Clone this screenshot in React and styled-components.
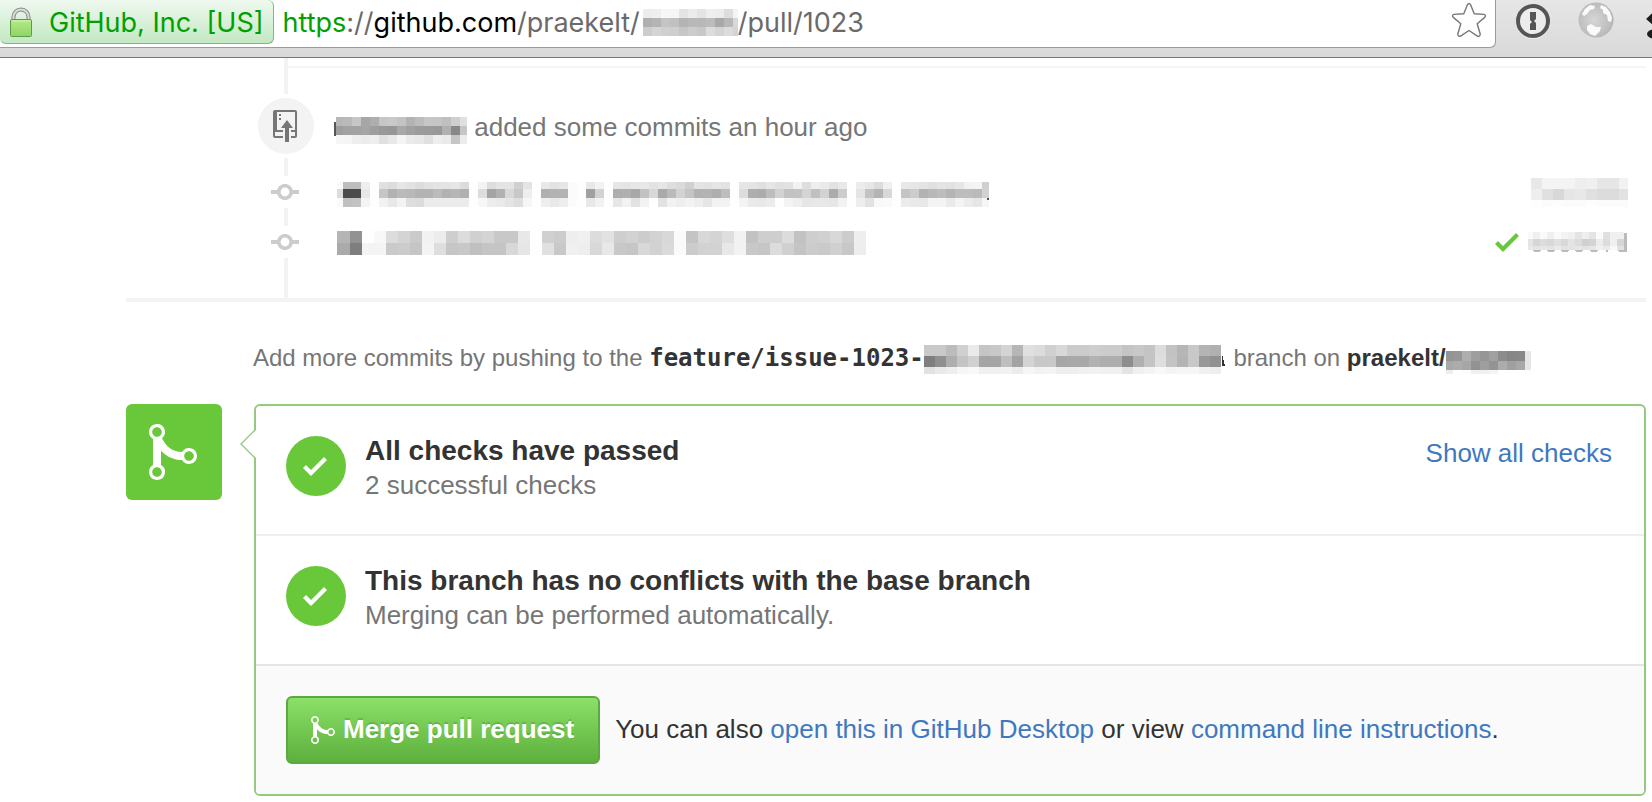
import React from "react";
import styled, { createGlobalStyle } from "styled-components";

const GlobalStyle = createGlobalStyle`
  * { box-sizing: border-box; }
  body {
    margin: 0;
    background: #fff;
    color: #333;
    font-family: "Liberation Sans", Arial, sans-serif;
    font-size: 26px;
    line-height: 34px;
    overflow-x: hidden;
  }
  button { font: inherit; cursor: pointer; }
  svg { display: block; flex: none; }
`;

/* ---------- browser chrome ---------- */

const BrowserBar = styled.header`
  display: flex;
  align-items: flex-start;
  height: 58px;
  background: linear-gradient(#e6e6e6, #d9d9d9);
  border-bottom: 1px solid #777;
  overflow: hidden;
`;

const AddressBar = styled.div`
  flex: 1;
  min-width: 0;
  display: flex;
  align-items: flex-start;
  height: 48px;
  padding-right: 8px;
  background: #fff;
  border: solid #9a9a9a;
  border-width: 0 1px 1px 0;
  border-bottom-right-radius: 6px;
  font-family: Inter, Roboto, sans-serif;
  font-size: 27px;
  line-height: 46px;
  white-space: nowrap;
`;

const IdentityButton = styled.button`
  flex: none;
  display: flex;
  align-items: center;
  gap: 16px;
  height: 44px;
  padding: 2px 9px 0 9px;
  color: #00a000;
  background: linear-gradient(#eff9ef, #c3e8c3);
  border: solid #7fb87f;
  border-width: 0 1px 1px 0;
  border-radius: 0 6px 6px 6px;
`;

const Url = styled.div`
  flex: 1;
  min-width: 0;
  padding-left: 9px;
  color: #6a6a6a;
  overflow: hidden;
`;

const Scheme = styled.span`
  color: #00a000;
`;

const Host = styled.span`
  color: #000;
`;

const IconButton = styled.button`
  flex: none;
  padding: 0;
  border: 0;
  background: none;
`;

const Extensions = styled.div`
  flex: none;
  display: flex;
  gap: 28px;
  width: 156px;
  padding: 2px 0 0 20px;
  overflow: hidden;
`;

/* ---------- timeline ---------- */

const Page = styled.main`
  padding: 0 6px 0 126px;
`;

const PreviousItem = styled.div`
  height: 36px;
  margin-left: 158px;
  padding-top: 8px;
  border-left: 4px solid #f3f3f3;
`;

const Rule = styled.hr`
  height: 2px;
  margin: 0;
  border: 0;
  background: #f5f5f5;
`;

const Timeline = styled.section`
  padding-left: 132px;
  border-bottom: 4px solid #f3f3f3;
`;

const TimelineRow = styled.div`
  display: flex;
  align-items: center;
  gap: 20px;
  min-height: ${(p) => (p.$tall ? 64 : 32)}px;
  padding-right: 18px;
`;

const Rail = styled.div`
  flex: none;
  display: flex;
  justify-content: center;
  width: 56px;
  padding-right: ${(p) => (p.$bare ? 2 : 0)}px;
  color: #ccc;
`;

const RailSegment = styled.div`
  width: 4px;
  height: ${(p) => p.$length}px;
  margin-left: 26px;
  background: #f3f3f3;
`;

const RailBadge = styled.span`
  display: flex;
  align-items: center;
  justify-content: center;
  width: 56px;
  height: 56px;
  padding-right: 2px;
  border-radius: 50%;
  background: #f3f3f3;
  color: #767676;
`;

const Summary = styled.p`
  margin: 0;
  padding-top: 2px;
  color: #767676;
`;

const CommitRef = styled.div`
  display: flex;
  align-items: center;
  gap: 9px;
  margin-left: auto;
  color: #69c83a;
`;

const PushHint = styled.p`
  margin: 0;
  padding: 39px 0 29px 127px;
  color: #767676;
  font-size: 24px;
  white-space: nowrap;
`;

const BranchName = styled.code`
  color: #333;
  font-family: "DejaVu Sans Mono", monospace;
  font-size: 24px;
  font-weight: 700;
`;

const RepoName = styled.strong`
  color: #333;
`;

/* ---------- merge box ---------- */

const MergeArea = styled.section`
  display: flex;
  align-items: flex-start;
  gap: 32px;
`;

const MergeAvatar = styled.div`
  flex: none;
  display: flex;
  align-items: center;
  justify-content: center;
  width: 96px;
  height: 96px;
  padding-right: 2px;
  border-radius: 6px;
  color: #fff;
  background: #69c83a;
`;

const MergeBox = styled.div`
  position: relative;
  flex: 1;
  min-width: 0;
  border: 2px solid #95c97e;
  border-radius: 6px;
`;

const Caret = styled.svg`
  position: absolute;
  top: 23px;
  left: -16px;
`;

const StatusRow = styled.div`
  display: flex;
  align-items: flex-start;
  gap: 19px;
  padding: 30px 32px 32px 30px;
  border-bottom: 2px solid ${(p) => (p.$last ? "#e5e5e5" : "#eee")};
`;

const StatusIcon = styled.span`
  flex: none;
  display: flex;
  align-items: center;
  justify-content: center;
  width: 60px;
  height: 60px;
  padding-right: 2px;
  border-radius: 50%;
  color: #fff;
  background: #69c83a;
`;

const StatusText = styled.div`
  flex: 1;
`;

const StatusTitle = styled.h4`
  margin: 0;
  font-size: 28px;
  line-height: 30px;
`;

const StatusDetail = styled.p`
  margin: 2px 0 0;
  color: #767676;
`;

const Link = styled.a`
  color: #4078c0;
  text-decoration: none;
`;

const MergeActions = styled.div`
  display: flex;
  align-items: center;
  gap: 15px;
  padding: 30px;
  background: #fafafa;
  border-radius: 0 0 4px 4px;
`;

const MergeButton = styled.button`
  flex: none;
  display: flex;
  align-items: center;
  gap: 8px;
  height: 68px;
  padding: 0 24px 0 23px;
  color: #fff;
  font-weight: 700;
  text-shadow: 0 -2px 0 rgba(0, 0, 0, 0.15);
  white-space: nowrap;
  background: linear-gradient(#8ae068, #5db03c);
  border: 2px solid #5ca941;
  border-radius: 6px;
`;

const ButtonLabel = styled.span`
  padding-bottom: 2px;
`;

const MergeHint = styled.p`
  margin: 0;
  padding-bottom: 2px;
`;

/* ---------- redacted text ---------- */

const MosaicSvg = styled.svg`
  display: ${(p) => (p.$inline ? "inline-block" : "block")};
  vertical-align: ${(p) => p.$drop || 0}px;
`;

/* Each band is [height, "shade shade ..."], a shade being the two hex digits of a grey. */
function Mosaic({ width, height, cell, first = cell, top = 0, bands, drop, children }) {
  let y = top;
  return (
    <MosaicSvg
      $inline={drop !== undefined}
      $drop={drop}
      width={width}
      height={height}
      shapeRendering="crispEdges"
      aria-hidden="true"
    >
      {bands.map(([h, shades]) => {
        const rowY = y;
        y += h;
        return shades.split(" ").map((s, i) => (
          <rect
            key={`${rowY}-${i}`}
            x={i === 0 ? 0 : first + (i - 1) * cell}
            y={rowY}
            width={i === 0 ? first : cell}
            height={h}
            fill={`#${s}${s}${s}`}
          />
        ));
      })}
      {children}
    </MosaicSvg>
  );
}

const urlRepo = [
  [9, "ff ec ee f6 f6 e4 ec e4 ee ec dd f4"],
  [9, "ff b0 b4 c4 c0 b4 b8 b8 bc a8 b8 d8"],
  [9, "ff cc d4 d0 ce c6 cc c8 dc d4 dc d4"],
];
const author = [
  [9, "b7 ba c6 a6 ae c6 c9 c3 b3 bc c6 c5 bf cf e0"],
  [9, "9d a2 a2 a5 9e 99 96 a8 a0 9b 9a 98 b0 88 c6"],
  [9, "f6 f5 ee ec ee e0 e8 f4 ea e8 e0 ee ea c5 ec"],
];
const messageOne = [
  [7, "fa bd bd ee fe e0 dc e6 e2 dd e2 e4 e4 e6 dc fe f3 dd e4 e4 d0 e4 fe e8 e2 e6 fb fe e8 f2 fe e6 e4 e6 e8 e2 e6 de da d0 e4 e2 e6 e2 fe e6 e4 e0 e6 e0 e2 f2 de ee ea e2 e8 fe ec e6 dc f0 fe e8 e6 e4 e0 e4 e2 e6 f2 f4 d0 ee"],
  [9, "dd 4b 4b e8 fe c6 b2 ba b8 b3 b3 bb b2 b6 b0 fe dd a4 b1 d8 c8 ee fe b0 b3 b3 fb fd a0 d2 fe ae b0 a8 c2 d8 aa ba d2 c4 b2 b3 ae bd fe dc ae ac bd d2 c2 c3 d4 c0 d2 ab cc fe e4 c2 b4 d8 fe c4 cc b2 b8 bd b4 bd bd ba d2 ee"],
  [9, "fa c0 c2 f4 fe f2 e8 f3 de dc ec ec ec ec ec fe f7 ed ea e4 de f6 fe ee e8 ee fc fe e8 f2 fe e6 f2 e2 f2 fe e2 f2 ee f3 ee e6 f2 f2 fe f4 ea e8 ec fe f4 ee e6 e8 e8 e6 f2 fe ee e2 f8 fa fe ec ea e8 f4 f4 ea f4 ec e6 f6 f4"],
];
const messageTwo = [
  [12, "b5 92 fe f8 dc d4 ca f2 ec ce dc d0 d4 c8 c8 e8 fe d0 cc ee f0 dc e2 ce d2 cc d2 d8 fa c4 d8 d4 de f2 c2 ce ce dc c2 ce d0 d8 cc ee"],
  [12, "aa 7e f4 f4 ca cc c5 f4 de c6 c8 c0 c5 c5 d8 e6 fe e0 c8 f0 ee d8 e8 c8 c6 d8 d2 da fa cc d2 d2 e8 f2 c8 c6 dc d0 c4 cc ca d0 c8 ee"],
];
const shaOne = [
  [11, "e8 f4 f4 f4 ee f0 e6 e6 f2"],
  [11, "ee e0 d8 e6 e8 e0 dc dc e2"],
  [7, "fe fb fd fb fb fd fb fb fb"],
];
const shaTwo = [
  [7, "fa f0 fa f0 fa f4 f0 e4 ee e4 fa e0 f0 f0"],
  [7, "e4 d6 dc d8 e0 d8 e4 dc d0 d4 ec dc f0 d6"],
  [4, "e8 e4 e6 e4 ea e2 e4 e6 e2 e6 f0 ea f8 e2"],
];
const branch = [
  [11, "c9 c9 bc d0 ea c5 c8 d4 b6 e0 dc d0 d8 cb cb ce cc cc c4 c8 c4 dc c2 b6 c8 b4 b0"],
  [11, "7e 90 ae c4 d0 a5 a5 be a3 d4 c8 c8 a6 a8 a8 b2 ae ae 8e b0 c4 de c4 b4 c8 98 90"],
  [7, "e2 ea ee f6 f8 f0 f0 f2 ec f6 f2 f4 ee ee f0 f2 f0 f0 e4 f0 f4 f8 f4 f6 f6 f0 ee"],
];
const repo = [
  [10, "94 96 ae 9e 96 a0 8c 86 88 e6"],
  [9, "a8 ac a6 92 9e 94 ac a0 a8 e6"],
  [4, "ee fe fc f0 f0 f4 fe fe fe fe"],
];

/* ---------- icons ---------- */

const icons = {
  merge: [12, "M10 7c-.73 0-1.38.41-1.73 1.02V8C7.22 7.98 6 7.64 5.14 6.98c-.75-.58-1.5-1.61-1.89-2.44A1.993 1.993 0 0 0 2 .99C.89.99 0 1.89 0 3a2 2 0 0 0 1 1.72v6.56c-.59.35-1 .99-1 1.72 0 1.11.89 2 2 2a1.993 1.993 0 0 0 1-3.72V7.67c.67.7 1.44 1.27 2.3 1.69.86.42 2.03.63 2.97.64v-.02c.36.61 1 1.02 1.73 1.02 1.11 0 2-.89 2-2 0-1.11-.89-2-2-2zm-6.8 6c0 .66-.55 1.2-1.2 1.2-.65 0-1.2-.55-1.2-1.2 0-.65.55-1.2 1.2-1.2.65 0 1.2.55 1.2 1.2zm0-10c0 .66-.55 1.2-1.2 1.2-.65 0-1.2-.55-1.2-1.2 0-.65.55-1.2 1.2-1.2.65 0 1.2.55 1.2 1.2zm6.8 7.2c-.66 0-1.2-.55-1.2-1.2 0-.65.55-1.2 1.2-1.2.65 0 1.2.55 1.2 1.2 0 .65-.55 1.2-1.2 1.2z"],
  push: [12, "M4 3H3V2h1v1zM3 5h1V4H3v1zm4 0L4 9h2v7h2V9h2L7 5zm4-5H1C.45 0 0 .45 0 1v12c0 .55.45 1 1 1h4v-1H1v-2h4v-1H2V1h9.02L11 10H9v1h2v2H9v1h2c.55 0 1-.45 1-1V1c0-.55-.45-1-1-1z"],
  commit: [14, "M10.86 7c-.45-1.72-2-3-3.86-3-1.86 0-3.41 1.28-3.86 3H0v2h3.14c.45 1.72 2 3 3.86 3 1.86 0 3.41-1.28 3.86-3H14V7h-3.14zM7 10.2c-1.22 0-2.2-.98-2.2-2.2 0-1.22.98-2.2 2.2-2.2 1.22 0 2.2.98 2.2 2.2 0 1.22-.98 2.2-2.2 2.2z"],
  check: [12, "M12 5l-8 8-4-4 1.5-1.5L4 10l6.5-6.5z"],
};

function Octicon({ name, scale = 2 }) {
  const [w, d] = icons[name];
  return (
    <svg width={w * scale} height={16 * scale} viewBox={`0 0 ${w} 16`} fill="currentColor" aria-hidden="true">
      <path d={d} />
    </svg>
  );
}

function LockIcon() {
  return (
    <svg width="24" height="32" viewBox="0 0 24 32" aria-hidden="true">
      <defs>
        <linearGradient id="lockBody" x1="0" y1="0" x2="0" y2="1">
          <stop offset="0" stopColor="#b4ea8c" />
          <stop offset="1" stopColor="#8fd464" />
        </linearGradient>
      </defs>
      <path d="M4.500 13V10a7.500 7.500 0 0 1 15 0V13" fill="none" stroke="#868686" strokeWidth="4" />
      <path d="M4.500 13V10a7.500 7.500 0 0 1 15 0V13" fill="none" stroke="#dcdcdc" strokeWidth="2" />
      <rect x="1.500" y="12.500" width="21" height="17" rx="1" fill="url(#lockBody)" stroke="#5c9c48" />
      <path d="M3 14h18" stroke="#cdf3b0" />
    </svg>
  );
}

function StarIcon() {
  return (
    <svg width="36" height="40" viewBox="0 0 36 40" aria-hidden="true">
      <path
        d="M16.400 4.700Q18 2.200 19.600 4.700L23.200 13.700L33 14.400Q35.600 15.200 33.700 17.400L26.200 23.800L29.200 34Q29.200 37 26.400 36.100L18 30.500L9.600 36.100Q6.800 37 6.800 34L9.800 23.800L2.300 17.400Q.4 15.200 3 14.400L12.800 13.700Z"
        fill="#fff"
        stroke="#777"
        strokeWidth="1.400"
        strokeLinejoin="round"
      />
    </svg>
  );
}

function KeyholeIcon() {
  return (
    <svg width="34" height="38" viewBox="0 0 34 38" aria-hidden="true">
      <circle cx="17" cy="20" r="17" fill="#fff" opacity=".5" />
      <circle cx="17" cy="19" r="15" fill="#ececec" stroke="#555" strokeWidth="4" />
      <path d="M14 10h6v7l-2 2 2 2v7H14v-6l2-2-2-2z" fill="#555" />
    </svg>
  );
}

function GlobeIcon() {
  return (
    <svg width="36" height="38" viewBox="0 0 36 38" aria-hidden="true">
      <defs>
        <radialGradient id="globe" cx=".45" cy=".5" r=".6">
          <stop offset="0" stopColor="#d6d6d6" />
          <stop offset=".8" stopColor="#bcbcbc" />
          <stop offset="1" stopColor="#a8a8a8" />
        </radialGradient>
      </defs>
      <circle cx="18" cy="18" r="17.500" fill="url(#globe)" />
      <path d="M7 7l5-4 5 1-1 3-4 1-3 4-3 2-2-2zM23 3l5 2 4 5 2 6-1 4-3-1-1-6-4-2 0-3-3-2zM9 24l4-2 5 3 5 0-1 4-3 3-2 2-5-2-3-4z" fill="#fafafa" />
    </svg>
  );
}

function OverflowIcon() {
  return (
    <svg width="28" height="38" viewBox="0 0 28 38" aria-hidden="true">
      <path d="M16 8L7 17l9 8" fill="none" stroke="#1c1c1c" strokeWidth="4" />
      <ellipse cx="14" cy="32" rx="9" ry="5" fill="#1c1c1c" />
    </svg>
  );
}

/* ---------- page ---------- */

function CommitRow({ message, sha }) {
  return (
    <TimelineRow>
      <Rail $bare>
        <Octicon name="commit" />
      </Rail>
      {message}
      <CommitRef>{sha}</CommitRef>
    </TimelineRow>
  );
}

function Status({ title, detail, action, last }) {
  return (
    <StatusRow $last={last}>
      <StatusIcon>
        <Octicon name="check" />
      </StatusIcon>
      <StatusText>
        <StatusTitle>{title}</StatusTitle>
        <StatusDetail>{detail}</StatusDetail>
      </StatusText>
      {action}
    </StatusRow>
  );
}

export default function App() {
  return (
    <>
      <GlobalStyle />
      <BrowserBar>
        <AddressBar>
          <IdentityButton type="button">
            <LockIcon />
            GitHub, Inc. [US]
          </IdentityButton>
          <Url>
            <Scheme>https</Scheme>://<Host>github.com</Host>/praekelt/
            <Mosaic width={98} height={27} cell={9} first={3} bands={urlRepo} drop={-4} />
            /pull/1023
          </Url>
          <IconButton type="button" aria-label="Bookmark this page">
            <StarIcon />
          </IconButton>
        </AddressBar>
        <Extensions>
          <IconButton type="button" aria-label="Password manager">
            <KeyholeIcon />
          </IconButton>
          <IconButton type="button" aria-label="Globe extension">
            <GlobeIcon />
          </IconButton>
          <IconButton type="button" aria-label="More extensions">
            <OverflowIcon />
          </IconButton>
        </Extensions>
      </BrowserBar>

      <Page>
        <PreviousItem>
          <Rule />
        </PreviousItem>
        <Timeline>
          <TimelineRow $tall>
            <Rail>
              <RailBadge>
                <Octicon name="push" />
              </RailBadge>
            </Rail>
            <Summary>
              <Mosaic width={133} height={27} cell={9} first={9} bands={author} drop={-8}>
                <rect width="2" height="27" fill="#fff" />
                <rect y="5" width="2" height="14" fill="#555" />
              </Mosaic>{" "}
              added some commits an hour ago
            </Summary>
          </TimelineRow>
          <RailSegment $length={18} />
          <CommitRow
            message={
              <Mosaic width={655} height={32} top={6} cell={9} first={9} bands={messageOne}>
                <rect width="3" height="32" fill="#fff" />
                <rect x="653" y="22" width="2" height="2" fill="#555" />
              </Mosaic>
            }
            sha={<Mosaic width={97} height={32} top={2} cell={11} bands={shaOne} />}
          />
          <RailSegment $length={18} />
          <CommitRow
            message={
              <Mosaic width={534} height={32} top={5} cell={12} first={16} bands={messageTwo}>
                <rect width="3" height="32" fill="#fff" />
              </Mosaic>
            }
            sha={
              <>
                <Octicon name="check" />
                <Mosaic width={100} height={32} top={6} cell={7} first={5} bands={shaTwo}>
                  <rect x="96" y="7" width="3" height="19" fill="#bbb" />
                  {[4, 18, 32, 46, 61, 89].map((x) => (
                    <path key={x} d={`M${x} 24h9l-2 2h-5z`} fill="#bbb" />
                  ))}
                  <rect x="78" y="24" width="2" height="2" fill="#bbb" />
                </Mosaic>
              </>
            }
          />
          <RailSegment $length={40} />
        </Timeline>

        <PushHint>
          Add more commits by pushing to the{" "}
          <BranchName>
            feature/issue-1023-
            <Mosaic width={303} height={29} cell={11} bands={branch} drop={-8}>
              <path d="M298 9l3 12h-3z" fill="#333" />
            </Mosaic>
          </BranchName>{" "}
          branch on{" "}
          <RepoName>
            praekelt/
            <Mosaic width={85} height={23} cell={9} first={7} bands={repo} drop={-8} />
          </RepoName>
        </PushHint>

        <MergeArea>
          <MergeAvatar>
            <Octicon name="merge" scale={4} />
          </MergeAvatar>
          <MergeBox>
            <Caret width="16" height="30" viewBox="0 0 16 30" aria-hidden="true">
              <path d="M16 1L1 15l15 14z" fill="#fff" />
              <path d="M15 1L1 15l14 14" fill="none" stroke="#95c97e" strokeWidth="1.300" />
            </Caret>
            <Status
              title="All checks have passed"
              detail="2 successful checks"
              action={<Link href="#checks">Show all checks</Link>}
            />
            <Status
              title="This branch has no conflicts with the base branch"
              detail="Merging can be performed automatically."
              last
            />
            <MergeActions>
              <MergeButton type="button">
                <Octicon name="merge" />
                <ButtonLabel>Merge pull request</ButtonLabel>
              </MergeButton>
              <MergeHint>
                You can also <Link href="#desktop">open this in GitHub Desktop</Link> or view{" "}
                <Link href="#cli">command line instructions</Link>.
              </MergeHint>
            </MergeActions>
          </MergeBox>
        </MergeArea>
      </Page>
    </>
  );
}
